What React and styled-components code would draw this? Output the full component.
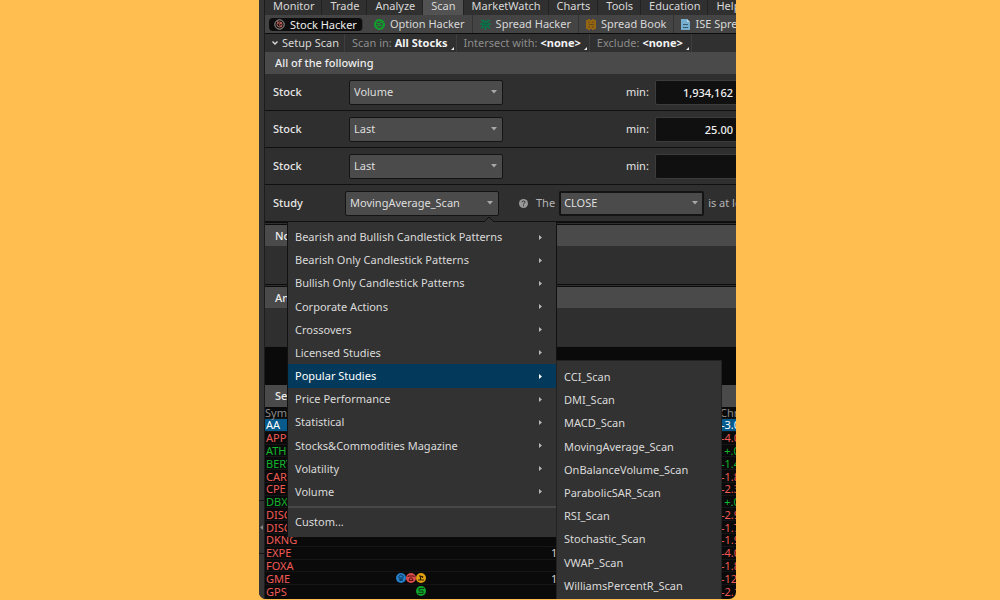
import React, { useState } from "react";
import styled, { createGlobalStyle, css } from "styled-components";

const GlobalStyle = createGlobalStyle`
  * {
    box-sizing: border-box;
  }
  body {
    margin: 0;
    background-color: #ffbe4f;
    font-family: "Noto Sans", "Open Sans", sans-serif;
    font-size: 11px;
    line-height: 12px;
    color: #d8d8d8;
  }
  button, input, select {
    font: inherit;
    color: inherit;
  }
  ul {
    list-style: none;
    margin: 0;
    padding: 0;
  }
`;

const Page = styled.div`
  display: grid;
  grid-template-columns: 259fr 477fr 264fr;
  height: 100vh;
  overflow: hidden;
`;

const AppWindow = styled.main`
  grid-column: 2;
  display: grid;
  grid-template-columns: 6px minmax(0, 1fr);
  height: calc(100vh - 1px);
  overflow: hidden;
  background-color: #0a0a0a;
  border-radius: 0 0 7px 7px;
  white-space: nowrap;
`;

const Gutter = styled.aside`
  display: flex;
  flex-direction: column;
  justify-content: flex-end;
  padding-bottom: 45px;
  background-color: #353535;
  border-right: 1px solid #1c1c1c;
`;

const Handle = styled.button`
  display: grid;
  place-content: center;
  height: 54px;
  padding: 0;
  background: none;
  border: solid #161616;
  border-width: 1px 0;
`;

const Content = styled.div`
  display: flex;
  flex-direction: column;
  min-width: 0;
`;

const Tabs = styled.nav`
  display: flex;
  height: 15px;
  overflow: hidden;
  background-color: #303030;
`;

const Tab = styled.button`
  flex: none;
  height: 15px;
  padding: 0 7px 4px 8px;
  line-height: 11px;
  border: none;
  border-right: 1px solid #222;
  background-color: ${(props) => (props.$active ? "#525252" : "transparent")};
`;

const Tools = styled.nav`
  display: flex;
  height: 19px;
  overflow: hidden;
  background-color: #444;
  border-bottom: 1px solid #0c0c0c;
`;

const Tool = styled.button`
  flex: none;
  display: flex;
  align-items: center;
  gap: 5px;
  height: 18px;
  padding: 0 7px;
  border: none;
  border-right: 1px solid #333;
  background: none;
  ${(props) =>
    props.$active &&
    css`
      height: 13px;
      margin: 3px 4px;
      padding: 0 5px;
      border-radius: 4px;
      background-color: #0d0d0d;
      color: #eee;
    `}
`;

const ScanBar = styled.div`
  display: flex;
  height: 18px;
  background-color: #303030;
`;

const SetupButton = styled.button`
  display: flex;
  align-items: center;
  gap: 4px;
  width: 80px;
  padding: 0 0 0 7px;
  border: none;
  border-right: 1px solid #3e3e3e;
  background: none;
`;

const Filter = styled.button`
  display: flex;
  align-items: center;
  gap: 3px;
  padding: 0 2px 0 7px;
  border: none;
  border-right: 1px solid #3e3e3e;
  background: none;
  color: #8c8c8c;
  b {
    color: #f2f2f2;
  }
  svg {
    align-self: flex-end;
    margin-bottom: 2px;
  }
`;

const SectionTitle = styled.h2`
  flex: none;
  height: ${(props) => (props.$tall ? 22 : 21)}px;
  margin: 0;
  padding: 0 10px;
  background-color: #4a4a4a;
  font-size: 11px;
  font-weight: 500;
  line-height: 22px;
  color: #ececec;
`;

const Section = styled.section`
  flex: none;
  height: 62px;
  background-color: #2f2f2f;
  border-top: 3px double #0c0c0c;
`;

const ScanRow = styled.div`
  flex: none;
  display: flex;
  align-items: center;
  height: 37px;
  padding-left: 8px;
  background-color: #2f2f2f;
  border-bottom: 1px solid #101010;
  color: #e6e6e6;
`;

const RowLabel = styled.label`
  flex: none;
  width: ${(props) => (props.$study ? 72 : 76)}px;
  font-weight: 500;
`;

const SelectBox = styled.div`
  position: relative;
  flex: none;
  display: flex;
  width: ${(props) => props.$width}px;
  > svg {
    position: absolute;
    right: 6px;
    top: 10px;
    pointer-events: none;
  }
`;

const Select = styled.select`
  appearance: none;
  width: 100%;
  height: 25px;
  padding: 0 ${(props) => (props.$strong ? 3 : 4)}px;
  line-height: 16px;
  background-color: #4b4b4b;
  border: ${(props) => (props.$strong ? 2 : 1)}px solid #141414;
  border-radius: 2px;
  color: #dedede;
`;

const MinLabel = styled.label`
  flex: none;
  width: 29px;
  margin-left: 123px;
`;

const MinInput = styled.input`
  flex: none;
  width: 90px;
  height: 25px;
  padding: 0 11px 0 4px;
  background-color: #101010;
  border: 1px solid #3c3c3c;
  border-radius: 2px;
  text-align: right;
  font-weight: 500;
  color: #f0f0f0;
`;

const Condition = styled.div`
  display: flex;
  align-items: center;
  gap: 4px;
  margin-left: 20px;
  color: #b5b5b5;
  > svg {
    margin-right: 4px;
  }
`;

const Preview = styled.div`
  flex: none;
  height: 39px;
  border-top: 1px solid #2c2c2c;
`;

const Results = styled.table`
  flex: none;
  width: calc(100% + 10px);
  height: 190px;
  table-layout: fixed;
  border-collapse: collapse;
  line-height: 11px;
  th {
    height: 11px;
    padding: 0;
    font-weight: 400;
    text-align: left;
    color: #8a8a8a;
  }
  td {
    height: 11px;
    padding: 0 0 0 1px;
    border-top: 1px solid #161616;
  }
`;

const Col = styled.col`
  width: ${(props) => props.$width}px;
`;

const ResultRow = styled.tr`
  color: ${(props) => (props.$up ? "#12b52c" : "#f05a55")};
  ${(props) =>
    props.$selected &&
    css`
      color: #fff;
      background-color: #075a8c;
    `}
  td:last-child {
    text-align: right;
  }
`;

const Volume = styled.td`
  color: #d0d0d0;
`;

const Badges = styled.div`
  display: flex;
  justify-content: flex-end;
`;

const Menu = styled.div`
  position: absolute;
  z-index: 1;
  top: 30px;
  left: -58px;
  width: 270px;
  padding-top: 4px;
  background-color: #323232;
  border: solid #111;
  border-width: 1px 1px 0;
  > svg {
    position: absolute;
    top: -5px;
    right: 62px;
  }
`;

const MenuList = styled.ul`
  display: grid;
  grid-auto-rows: 1fr;
  height: ${(props) => props.$height}px;
`;

const MenuItem = styled.li`
  position: relative;
  display: flex;
`;

const MenuButton = styled.button`
  flex: 1;
  display: flex;
  align-items: center;
  justify-content: space-between;
  padding: 0 14px 0 7px;
  border: none;
  background-color: ${(props) => (props.$open ? "#033a5c" : "transparent")};
  color: ${(props) => (props.$open ? "#fff" : "#dadada")};
  text-align: left;
`;

const MenuFooter = styled.div`
  display: flex;
  height: 31px;
  margin-top: 2px;
  border-top: 2px solid #474747;
`;

const Submenu = styled.div`
  position: absolute;
  top: -4px;
  left: 100%;
  width: 166px;
  padding: 4px 0 8px;
  background-color: #323232;
  border: 1px solid #222;
`;

const Caret = () => (
  <svg width="6" height="4">
    <path d="M0 0H6L3 3.5Z" fill="#a8a8a8" />
  </svg>
);

const Corner = () => (
  <svg width="3" height="3">
    <path d="M3 0V3H0Z" fill="#eee" />
  </svg>
);

const Arrow = ({ fill = "#b8b8b8" }) => (
  <svg width="3" height="5">
    <path d="M0 0L3 2.5L0 5Z" fill={fill} />
  </svg>
);

const toolIcons = {
  target: (
    <svg width="11" height="11" viewBox="0 0 11 11" fill="none">
      <circle cx="5.5" cy="5.5" r="4.7" stroke="#a9a09f" />
      <circle cx="5.5" cy="5.5" r="2.5" stroke="#b8756e" />
      <path d="M5 5.5L8 3.5M3 2L5 4.5M5.5 6.5L8 8" stroke="#c4574d" strokeWidth="1.1" />
    </svg>
  ),
  option: (
    <svg width="11" height="11" viewBox="0 0 11 11" fill="none">
      <circle cx="5.5" cy="5.5" r="4.4" stroke="#0ba52b" strokeWidth="2.2" strokeDasharray="2.5 .3" />
      <path d="M3 4.5H5.5L8 3M3 7L5.5 6L8 7" stroke="#0ba52b" strokeWidth="1.2" />
    </svg>
  ),
  spread: (
    <svg width="11" height="11" viewBox="0 0 11 11" fill="none">
      <circle cx="5.5" cy="5" r="3.6" fill="#0b7048" />
      <path d="M1 1.5H4M7 1.5H10M0 5H2M9 5H11M1 9.5L3.5 7M10 9.5L7.5 7M5.5 8V11" stroke="#087a4c" strokeWidth="1.6" />
      <path d="M3 4.5H8M4 6.5H7" stroke="#26473f" strokeDasharray="1 1" />
    </svg>
  ),
  book: (
    <svg width="10" height="11" viewBox="0 0 10 11">
      <path d="M0 1H2V0H4V1H6V0H8V1H10V10H8V11H6V10H4V11H2V10H0Z" fill="#946512" />
      <path d="M2 3H4M6 3H8M3 5.5H8M2 8H4M6 8H8" stroke="#664919" />
    </svg>
  ),
  page: (
    <svg width="9" height="11" viewBox="0 0 9 11">
      <path d="M0 0H6L9 3V11H0Z" fill="#76aecf" />
      <path d="M2 5.5H7M2 8.5H7" stroke="#345b72" />
      <path d="M6 0V3H9" fill="#b9d6e5" />
    </svg>
  ),
};

const badgeIcons = {
  bulb: (
    <svg width="10" height="10" viewBox="0 0 10 10" fill="none">
      <circle cx="5" cy="5" r="5" fill="#2580c8" />
      <path d="M4 8V6C2 4 3 2 5 2S8 4 6 6V8M5 4V8" stroke="#082f50" />
    </svg>
  ),
  phone: (
    <svg width="10" height="10" viewBox="0 0 10 10" fill="none">
      <circle cx="5" cy="5" r="5" fill="#dd4b4b" />
      <path d="M2 4V3H8V4M3 7.5L4 5H6L7 7.5Z" stroke="#551414" />
    </svg>
  ),
  split: (
    <svg width="10" height="10" viewBox="0 0 10 10" fill="none">
      <circle cx="5" cy="5" r="5" fill="#e0a010" />
      <path d="M2 7H8M4.5 7V3H3M5 3.5H6.5V5" stroke="#302000" strokeWidth="1.2" />
    </svg>
  ),
  dividend: (
    <svg width="10" height="10" viewBox="0 0 10 10" fill="none">
      <circle cx="5" cy="5" r="5" fill="#10a52c" />
      <path d="M8 2.5H3V5H7V7.5H2" stroke="#063d10" />
    </svg>
  ),
};

const tabs = ["Monitor", "Trade", "Analyze", "Scan", "MarketWatch", "Charts", "Tools", "Education", "Help"];

const tools = [
  { name: "Stock Hacker", icon: "target" },
  { name: "Option Hacker", icon: "option" },
  { name: "Spread Hacker", icon: "spread" },
  { name: "Spread Book", icon: "book" },
  { name: "ISE Spread Book", icon: "page" },
];

const filters = [
  { label: "Scan in:", value: "All Stocks" },
  { label: "Intersect with:", value: "<none>" },
  { label: "Exclude:", value: "<none>" },
];

const stockRows = [
  { field: "Volume", min: "1,934,162" },
  { field: "Last", min: "25.00" },
  { field: "Last", min: "" },
];

const studies = [
  "Bearish and Bullish Candlestick Patterns",
  "Bearish Only Candlestick Patterns",
  "Bullish Only Candlestick Patterns",
  "Corporate Actions",
  "Crossovers",
  "Licensed Studies",
  "Popular Studies",
  "Price Performance",
  "Statistical",
  "Stocks&Commodities Magazine",
  "Volatility",
  "Volume",
];

const popularStudies = [
  "CCI_Scan",
  "DMI_Scan",
  "MACD_Scan",
  "MovingAverage_Scan",
  "OnBalanceVolume_Scan",
  "ParabolicSAR_Scan",
  "RSI_Scan",
  "Stochastic_Scan",
  "VWAP_Scan",
  "WilliamsPercentR_Scan",
];

const results = [
  { symbol: "AA", change: "-3.02" },
  { symbol: "APPS", change: "-4.01" },
  { symbol: "ATH", change: "+.04", up: true },
  { symbol: "BERY", change: "-1.44", up: true },
  { symbol: "CAR", change: "-1.84" },
  { symbol: "CPE", change: "-2.31" },
  { symbol: "DBX", change: "+.05", up: true },
  { symbol: "DISCA", change: "-2.90" },
  { symbol: "DISCK", change: "-1.72" },
  { symbol: "DKNG", change: "-1.93" },
  { symbol: "EXPE", change: "-4.02", volume: "1" },
  { symbol: "FOXA", change: "-1.83" },
  { symbol: "GME", change: "-12.70", volume: "1", badges: ["bulb", "phone", "split"] },
  { symbol: "GPS", change: "-2.10", badges: ["dividend"] },
];

function StudyMenu() {
  const [open, setOpen] = useState("Popular Studies");

  return (
    <Menu>
      <svg width="10" height="5">
        <path d="M0 5L5 0L10 5Z" fill="#323232" />
        <path d="M0 5L5 0L10 5" fill="none" stroke="#111" />
      </svg>
      <MenuList $height={278}>
        {studies.map((study) => (
          <MenuItem key={study}>
            <MenuButton $open={study === open} onClick={() => setOpen(study)}>
              {study}
              <Arrow fill={study === open ? "#fff" : undefined} />
            </MenuButton>
            {study === "Popular Studies" && open === study && (
              <Submenu>
                <MenuList $height={232}>
                  {popularStudies.map((name) => (
                    <MenuItem key={name}>
                      <MenuButton>{name}</MenuButton>
                    </MenuItem>
                  ))}
                </MenuList>
              </Submenu>
            )}
          </MenuItem>
        ))}
      </MenuList>
      <MenuFooter>
        <MenuButton>Custom...</MenuButton>
      </MenuFooter>
    </Menu>
  );
}

export default function App() {
  return (
    <Page>
      <GlobalStyle />
      <AppWindow>
        <Gutter>
          <Handle aria-label="Toggle sidebar">
            <svg width="3" height="5">
              <path d="M3 0L0 2.5L3 5Z" fill="#888" />
            </svg>
          </Handle>
        </Gutter>
        <Content>
          <Tabs>
            {tabs.map((tab) => (
              <Tab key={tab} $active={tab === "Scan"}>
                {tab}
              </Tab>
            ))}
          </Tabs>
          <Tools>
            {tools.map((tool, i) => (
              <Tool key={tool.name} $active={i === 0}>
                {toolIcons[tool.icon]}
                {tool.name}
              </Tool>
            ))}
          </Tools>
          <ScanBar>
            <SetupButton>
              <svg width="6" height="4" fill="none">
                <path d="M.5 .5L3 3L5.5 .5" stroke="#ddd" strokeWidth="1.3" />
              </svg>
              Setup Scan
            </SetupButton>
            {filters.map((filter) => (
              <Filter key={filter.label}>
                {filter.label} <b>{filter.value}</b>
                <Corner />
              </Filter>
            ))}
          </ScanBar>
          <SectionTitle $tall>All of the following</SectionTitle>
          {stockRows.map((row, i) => (
            <ScanRow key={i}>
              <RowLabel htmlFor={`field-${i}`}>Stock</RowLabel>
              <SelectBox $width={154}>
                <Select id={`field-${i}`} defaultValue={row.field}>
                  <option>{row.field}</option>
                </Select>
                <Caret />
              </SelectBox>
              <MinLabel htmlFor={`min-${i}`}>min:</MinLabel>
              <MinInput id={`min-${i}`} defaultValue={row.min} />
            </ScanRow>
          ))}
          <ScanRow>
            <RowLabel $study htmlFor="study">
              Study
            </RowLabel>
            <SelectBox $width={154}>
              <Select id="study">
                <option>MovingAverage_Scan</option>
              </Select>
              <Caret />
              <StudyMenu />
            </SelectBox>
            <Condition>
              <svg width="9" height="9" viewBox="0 0 9 9" fill="none">
                <circle cx="4.5" cy="4.5" r="4.5" fill="#999" />
                <path d="M3 3.3C3 1.5 6 1.5 6 3.3C6 4.5 4.5 4 4.5 5.5M4.5 6.3V7.3" stroke="#2f2f2f" />
              </svg>
              <label htmlFor="price">The</label>
              <SelectBox $width={145}>
                <Select id="price" $strong>
                  <option>CLOSE</option>
                </Select>
                <Caret />
              </SelectBox>
              is at least
            </Condition>
          </ScanRow>
          <Section>
            <SectionTitle>None of the following</SectionTitle>
          </Section>
          <Section>
            <SectionTitle>Any of the following</SectionTitle>
          </Section>
          <Preview />
          <SectionTitle $tall>Search Results</SectionTitle>
          <Results>
            <colgroup>
              <Col $width={60} />
              <Col $width={101} />
              <col />
              <Col $width={170} />
              <Col $width={26} />
            </colgroup>
            <thead>
              <tr>
                <th>Symbol</th>
                <th />
                <th />
                <th />
                <th>Chng</th>
              </tr>
            </thead>
            <tbody>
              {results.map((row) => (
                <ResultRow key={row.symbol} $up={row.up} $selected={row.symbol === "AA"}>
                  <td>{row.symbol}</td>
                  <td>
                    <Badges>
                      {row.badges?.map((badge) => (
                        <React.Fragment key={badge}>{badgeIcons[badge]}</React.Fragment>
                      ))}
                    </Badges>
                  </td>
                  <td />
                  <Volume>{row.volume}</Volume>
                  <td>{row.change}</td>
                </ResultRow>
              ))}
            </tbody>
          </Results>
        </Content>
      </AppWindow>
    </Page>
  );
}
